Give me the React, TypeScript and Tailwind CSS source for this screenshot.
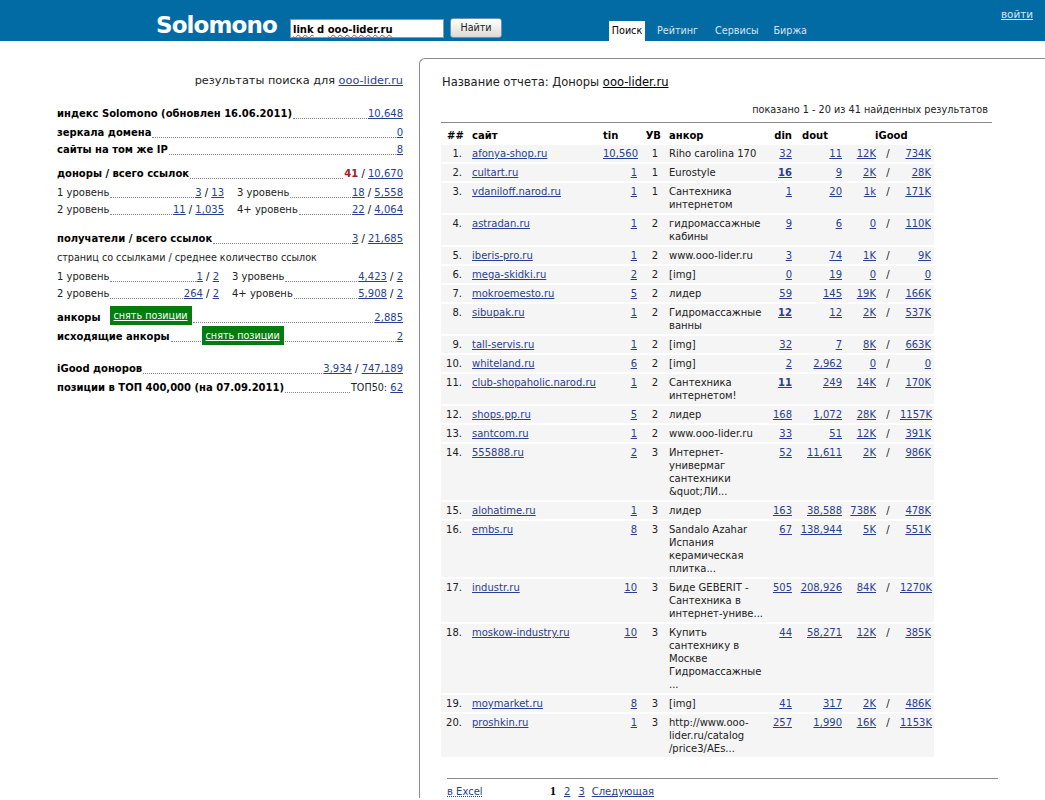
import React from "react"

type Row = {
  site: string
  tin: string
  uv: string
  anchor: string
  din: string
  dout: string
  good1: string
  good2: string
  boldDin?: boolean
}

const rows: Row[] = [
  { site: "afonya-shop.ru", tin: "10,560", uv: "1", anchor: "Riho carolina 170", din: "32", dout: "11", good1: "12K", good2: "734K" },
  { site: "cultart.ru", tin: "1", uv: "1", anchor: "Eurostyle", din: "16", dout: "9", good1: "2K", good2: "28K", boldDin: true },
  { site: "vdaniloff.narod.ru", tin: "1", uv: "1", anchor: "Сантехника\nинтернетом", din: "1", dout: "20", good1: "1k", good2: "171K" },
  { site: "astradan.ru", tin: "1", uv: "2", anchor: "гидромассажные\nкабины", din: "9", dout: "6", good1: "0", good2: "110K" },
  { site: "iberis-pro.ru", tin: "1", uv: "2", anchor: "www.ooo-lider.ru", din: "3", dout: "74", good1: "1K", good2: "9K" },
  { site: "mega-skidki.ru", tin: "2", uv: "2", anchor: "[img]", din: "0", dout: "19", good1: "0", good2: "0" },
  { site: "mokroemesto.ru", tin: "5", uv: "2", anchor: "лидер", din: "59", dout: "145", good1: "19K", good2: "166K" },
  { site: "sibupak.ru", tin: "1", uv: "2", anchor: "Гидромассажные\nванны", din: "12", dout: "12", good1: "2K", good2: "537K", boldDin: true },
  { site: "tall-servis.ru", tin: "1", uv: "2", anchor: "[img]", din: "32", dout: "7", good1: "8K", good2: "663K" },
  { site: "whiteland.ru", tin: "6", uv: "2", anchor: "[img]", din: "2", dout: "2,962", good1: "0", good2: "0" },
  { site: "club-shopaholic.narod.ru", tin: "1", uv: "2", anchor: "Сантехника\nинтернетом!", din: "11", dout: "249", good1: "14K", good2: "170K", boldDin: true },
  { site: "shops.pp.ru", tin: "5", uv: "2", anchor: "лидер", din: "168", dout: "1,072", good1: "28K", good2: "1157K" },
  { site: "santcom.ru", tin: "1", uv: "2", anchor: "www.ooo-lider.ru", din: "33", dout: "51", good1: "12K", good2: "391K" },
  { site: "555888.ru", tin: "2", uv: "3", anchor: "Интернет-\nунивермаг\nсантехники\n&quot;ЛИ...", din: "52", dout: "11,611", good1: "2K", good2: "986K" },
  { site: "alohatime.ru", tin: "1", uv: "3", anchor: "лидер", din: "163", dout: "38,588", good1: "738K", good2: "478K" },
  { site: "embs.ru", tin: "8", uv: "3", anchor: "Sandalo Azahar\nИспания\nкерамическая\nплитка...", din: "67", dout: "138,944", good1: "5K", good2: "551K" },
  { site: "industr.ru", tin: "10", uv: "3", anchor: "Биде GEBERIT -\nСантехника в\nинтернет-униве...", din: "505", dout: "208,926", good1: "84K", good2: "1270K" },
  { site: "moskow-industry.ru", tin: "10", uv: "3", anchor: "Купить\nсантехнику в\nМоскве\nГидромассажные\n...", din: "44", dout: "58,271", good1: "12K", good2: "385K" },
  { site: "moymarket.ru", tin: "8", uv: "3", anchor: "[img]", din: "41", dout: "317", good1: "2K", good2: "486K" },
  { site: "proshkin.ru", tin: "1", uv: "3", anchor: "http://www.ooo-\nlider.ru/catalog\n/price3/AEs...", din: "257", dout: "1,990", good1: "16K", good2: "1153K" },
]

const A = ({ children, className = "" }: { children: React.ReactNode; className?: string }) => (
  <a href="#" className={`text-[#2a3f8f] underline ${className}`}>
    {children}
  </a>
)

const Leader = () => <span className="flex-1 mx-px mb-[3px] min-w-0 border-b border-dotted border-[#888]" />

const Line = ({ label, bold = true, className = "", children }: { label: React.ReactNode; bold?: boolean; className?: string; children: React.ReactNode }) => (
  <div className={`flex h-[17px] items-end leading-[17px] whitespace-nowrap ${className}`}>
    <span className={bold ? "font-bold text-black" : "text-[#222]"}>{label}</span>
    <Leader />
    <span>{children}</span>
  </div>
)

const Pair = ({ a, b }: { a: string; b: string }) => (
  <>
    <A>{a}</A> / <A>{b}</A>
  </>
)

const PositionsButton = ({ className = "" }: { className?: string }) => (
  <a href="#" className={`bg-[#067b0f] text-[9.6px] text-white underline px-[4px] h-[19px] leading-[19px] block ${className}`}>
    снять позиции
  </a>
)

const LevelRow = ({ left, right, wide = false, className = "" }: { left: [string, string, string]; right: [string, string, string]; wide?: boolean; className?: string }) => (
  <div className={`flex ${className}`}>
    <Line label={left[0]} bold={false} className={wide ? "w-[167px]" : "w-[162px]"}>
      <Pair a={left[1]} b={left[2]} />
    </Line>
    <Line label={right[0]} bold={false} className="flex-1 ml-[13px]">
      <Pair a={right[1]} b={right[2]} />
    </Line>
  </div>
)

const LeftColumn = () => (
  <aside className="w-[419px] shrink-0 pl-[57px] pr-[16px] text-[10px]">
    <div className="mt-[32px] text-right text-[11.3px] leading-[15px] text-[#222]">
      результаты поиска для <A>ooo-lider.ru</A>
    </div>
    <Line label="индекс Solomono (обновлен 16.06.2011)" className="mt-[17px]">
      <A>10,648</A>
    </Line>
    <Line label="зеркала домена" className="mt-[2px]">
      <A>0</A>
    </Line>
    <Line label="сайты на том же IP">
      <A>8</A>
    </Line>
    <Line label="доноры / всего ссылок" className="mt-[7px]">
      <b className="text-[#a01c2c]">41</b> / <A>10,670</A>
    </Line>
    <LevelRow wide className="mt-[2px]" left={["1 уровень", "3", "13"]} right={["3 уровень", "18", "5,558"]} />
    <LevelRow wide left={["2 уровень", "11", "1,035"]} right={["4+ уровень", "22", "4,064"]} />
    <Line label="получатели / всего ссылок" className="mt-[12px]">
      <Pair a="3" b="21,685" />
    </Line>
    <div className="mt-[2px] h-[17px] leading-[17px] text-[#222] text-[9.6px]">страниц со ссылками / среднее количество ссылок</div>
    <LevelRow className="mt-[2px]" left={["1 уровень", "1", "2"]} right={["3 уровень", "4,423", "2"]} />
    <LevelRow left={["2 уровень", "264", "2"]} right={["4+ уровень", "5,908", "2"]} />
    <div className="mt-[7px] flex h-[17px] items-end leading-[17px] whitespace-nowrap">
      <span className="font-bold text-black">анкоры</span>
      <PositionsButton className="ml-[9px] mb-px" />
      <Leader />
      <A>2,885</A>
    </div>
    <div className="mt-[2px] flex h-[17px] items-end leading-[17px] whitespace-nowrap">
      <span className="font-bold text-black">исходящие анкоры</span>
      <span className="w-[30px] mx-px mb-[3px] border-b border-dotted border-[#888]" />
      <PositionsButton />
      <Leader />
      <A>2</A>
    </div>
    <Line label="iGood доноров" className="mt-[15px]">
      <Pair a="3,934" b="747,189" />
    </Line>
    <Line label="позиции в ТОП 400,000 (на 07.09.2011)" className="mt-[2px]">
      <span className="text-[9.6px] text-[#222]">ТОП50:</span> <A>62</A>
    </Line>
  </aside>
)

const cell = "px-[2px] py-[2px] align-top"

const ResultsTable = () => (
  <table className="w-[493px] table-fixed border-separate border-spacing-x-0 border-spacing-y-[2px] text-[10px] leading-[13px] text-[#222]">
    <colgroup>
      <col className="w-[29px]" />
      <col className="w-[131px]" />
      <col className="w-[38px]" />
      <col className="w-[24px]" />
      <col className="w-[6px]" />
      <col className="w-[92px]" />
      <col className="w-[33px]" />
      <col className="w-[50px]" />
      <col className="w-[34px]" />
      <col className="w-[20px]" />
      <col className="w-[36px]" />
    </colgroup>
    <thead>
      <tr className="font-bold text-black">
        <th className="pl-[6px] pt-[2px] pb-px text-left whitespace-nowrap">##</th>
        <th className="pl-[2px] pt-[2px] pb-px text-left">сайт</th>
        <th className="pl-[2px] pt-[2px] pb-px text-left">tin</th>
        <th className="pr-[2px] pt-[2px] pb-px text-right">УВ</th>
        <th></th>
        <th className="pt-[2px] pb-px text-left">анкор</th>
        <th className="pr-[2px] pt-[2px] pb-px text-right">din</th>
        <th className="pl-[8px] pt-[2px] pb-px text-left whitespace-nowrap">dout</th>
        <th colSpan={3} className="pl-[31px] pt-[2px] pb-px text-left">iGood</th>
      </tr>
    </thead>
    <tbody>
      {rows.map((r, i) => (
        <tr key={r.site} className="bg-[#f5f5f5]">
          <td className={`${cell} text-right pr-[8px]`}>{i + 1}.</td>
          <td className={`${cell} whitespace-nowrap`}><A>{r.site}</A></td>
          <td className={`${cell} text-right whitespace-nowrap`}><A>{r.tin}</A></td>
          <td className={`${cell} text-right pr-[5px]`}>{r.uv}</td>
          <td className="py-[2px]"></td>
          <td className="py-[2px] align-top whitespace-pre">{r.anchor}</td>
          <td className={`${cell} text-right`}><A className={r.boldDin ? "font-bold" : ""}>{r.din}</A></td>
          <td className={`${cell} text-right whitespace-nowrap`}><A>{r.dout}</A></td>
          <td className={`${cell} text-right`}><A>{r.good1}</A></td>
          <td className="py-[2px] align-top text-center">/</td>
          <td className={`${cell} text-right pr-[3px]`}><A>{r.good2}</A></td>
        </tr>
      ))}
    </tbody>
  </table>
)

const ReportPanel = () => (
  <main className="mt-[17px] flex-1 min-w-0 rounded-tl-[6px] border-l border-t border-[#8a8a8a] pl-[21px] text-[10px]">
    <div className="ml-px mt-[15px] text-[11.5px] leading-[16px] text-[#222]">
      Название отчета: Доноры <a href="#" className="text-black underline">ooo-lider.ru</a>
    </div>
    <div className="mt-[13px] w-[547px] text-right text-[9.7px] leading-[13px] text-[#222]">
      показано 1 - 20 из 41 найденных результатов
    </div>
    <div className="mt-[6px] h-px w-[551px] bg-[#8a8a8a]" />
    <div className="mt-[2px]">
      <ResultsTable />
    </div>
    <div className="ml-[6px] mt-[19px] h-px w-[551px] bg-[#8a8a8a]" />
    <div className="ml-[6px] mt-[6px] flex leading-[13px]">
      <a href="#" className="w-[103px] text-[#2a3f8f] underline decoration-dotted">в Excel</a>
      <b className="mr-[8px] font-['Liberation_Serif',serif] text-[12px] text-black">1</b>
      <A className="mr-[8px]">2</A>
      <A className="mr-[7px]">3</A>
      <A>Следующая</A>
    </div>
  </main>
)

const Wavy = ({ children }: { children: React.ReactNode }) => (
  <span className="underline decoration-wavy decoration-[#d33] decoration-1">{children}</span>
)

const Header = () => (
  <header className="relative h-[41px] bg-[#036ba4] flex text-[9.6px]">
    <div className="ml-[156px] mt-[10px] h-[31px] w-[134px] text-[23px] leading-[31px] font-bold text-white tracking-[-0.9px]">Solomono</div>
    <div className="mt-[19px] h-[19px] w-[154px] bg-white border border-[#7f9db9] pl-[2px] text-[10px] leading-[19px] font-bold text-black whitespace-nowrap">
      <Wavy>link</Wavy> d <Wavy>ooo-lider.ru</Wavy>
    </div>
    <button className="ml-[6px] mt-[18px] h-[20px] w-[52px] rounded-[3px] border border-[#6f8fb5] bg-gradient-to-b from-white to-[#dcdcd4] text-[9.6px] text-[#222]">
      Найти
    </button>
    <nav className="ml-[107px] mt-[21px] flex h-[20px] leading-[20px] text-[#d2e6f2]">
      <span className="bg-white text-black w-[36px] text-center">Поиск</span>
      <a href="#" className="ml-[12px]">Рейтинг</a>
      <a href="#" className="ml-[17px]">Сервисы</a>
      <a href="#" className="ml-[15px]">Биржа</a>
    </nav>
    <a href="#" className="absolute right-[12px] top-[7px] text-[10.4px] leading-[14px] text-[#d2e6f2] underline">войти</a>
  </header>
)

export default function App() {
  return (
    <div className="h-[800px] overflow-hidden bg-white font-['DejaVu_Sans',sans-serif]">
      <Header />
      <div className="flex">
        <LeftColumn />
        <ReportPanel />
      </div>
    </div>
  )
}
